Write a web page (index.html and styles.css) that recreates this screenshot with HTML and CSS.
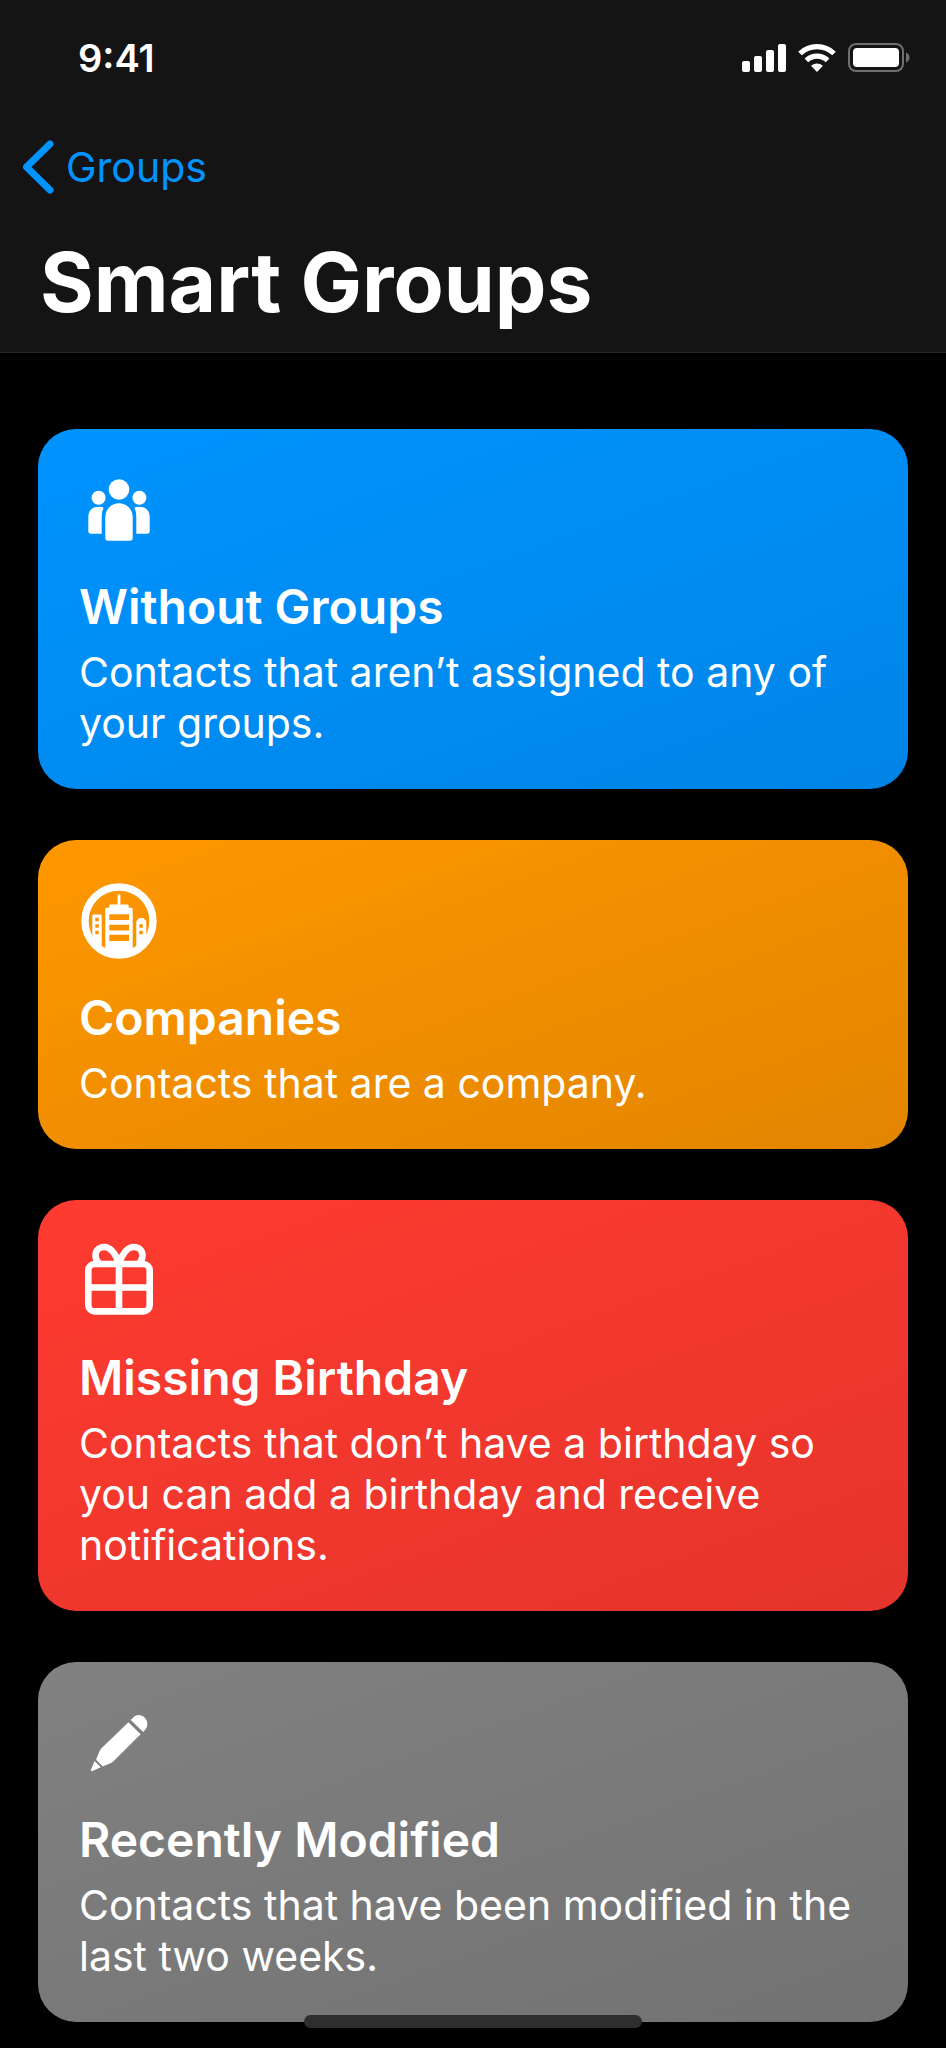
FILE: index.html
```html
<!DOCTYPE html>
<html lang="en">

<head>
  <meta charset="UTF-8">
  <meta name="viewport" content="width=device-width, initial-scale=1.0">
  <title>Smart Groups</title>

  <link rel="stylesheet" href="styles.css">
</head>

<body>
  <header class="header">
    <div class="status-bar">
      <span class="time">9:41</span>
      <div class="status-icons">
        <svg width="44" height="30" viewBox="0 0 44 30" fill="#fff">
          <rect x="0" y="18" width="8" height="11" rx="2" />
          <rect x="12" y="13" width="8" height="16" rx="2" />
          <rect x="24" y="7" width="8" height="22" rx="2" />
          <rect x="36" y="1" width="8" height="28" rx="2" />
        </svg>
        <svg width="38" height="30" viewBox="0 0 38 30">
          <path d="M2 10.5A24.5 24.5 0 0 1 36 10.5" fill="none" stroke="#fff" stroke-width="5.2" />
          <path d="M8.4 17.4A15.3 15.3 0 0 1 29.6 17.4" fill="none" stroke="#fff" stroke-width="5.2" />
          <path d="M19 29L13 22.8Q19 18 25 22.8Z" fill="#fff" />
        </svg>
        <svg width="62" height="30" viewBox="0 0 62 30">
          <rect x="1" y="1" width="54" height="27" rx="7" fill="none" stroke="#6f6f6f" stroke-width="2" />
          <rect x="5" y="5" width="46" height="19" rx="4" fill="#fff" />
          <path d="M58 9.5Q61.5 11 61.5 14.5Q61.5 18 58 19.5Z" fill="#6f6f6f" />
        </svg>
      </div>
    </div>
    <a class="back" href="#">
      <svg width="32" height="54" viewBox="0 0 32 54" fill="none" stroke="#0094ff" stroke-width="7" stroke-linecap="round" stroke-linejoin="round">
        <path d="M28 4L4.5 27L28 50" />
      </svg>
      Groups
    </a>
    <h1>Smart Groups</h1>
  </header>

  <main class="cards">
    <a class="card blue" href="#">
      <svg class="icon" viewBox="0 0 80 80" fill="#fff">
        <circle cx="40" cy="19.5" r="10.3" />
        <path d="M26.3 47A13.7 13.7 0 0 1 53.7 47V68Q53.7 70.7 51 70.7H29Q26.3 70.7 26.3 68Z" />
        <circle cx="19.6" cy="27.8" r="7" />
        <circle cx="60.4" cy="27.8" r="7" />
        <path d="M9.3 47Q9.5 37 20 36.8Q23 36.8 24.7 37.8Q22.7 41 22.7 47V63.8H12Q9.3 63.8 9.3 61Z" />
        <path d="M70.7 47Q70.5 37 60 36.8Q57 36.8 55.3 37.8Q57.3 41 57.3 47V63.8H68Q70.7 63.8 70.7 61Z" />
      </svg>
      <h2>Without Groups</h2>
      <p>Contacts that aren’t assigned to any of your groups.</p>
    </a>

    <a class="card orange" href="#">
      <svg class="icon" viewBox="0 0 80 80" fill="#fff">
        <circle cx="40" cy="40" r="34" fill="none" stroke="#fff" stroke-width="7.4" />
        <path fill-rule="evenodd" d="M26.3 72V28Q26.3 26.7 27.6 26.7H30.3V24.7Q30.3 23.4 31.6 23.4H38.6V14.4Q38.6 13.2 40 13.2Q41.4 13.2 41.4 14.4V23.4H48.4Q49.7 23.4 49.7 24.7V26.7H52.4Q53.7 26.7 53.7 28V72ZM30.3 33.3V39H50V33.3ZM30.3 43.7V49.5H50V43.7ZM30.3 53.8V60H50V53.8Z" />
        <path fill-rule="evenodd" d="M13.3 58V35Q13.3 33.6 14.7 33.6H21.3Q22.7 33.6 22.7 35V65.5ZM16.3 36.8V40.3H19.8V36.8ZM16.3 43.3V46.8H19.8V43.3ZM16.3 49.8V53.3H19.8V49.8Z" />
        <path fill-rule="evenodd" d="M57.3 65.5V40L60.3 37H64.3L67.3 40V58ZM60.3 43.3V46.8H63.8V43.3ZM60.3 49.8V53.3H63.8V49.8Z" />
      </svg>
      <h2>Companies</h2>
      <p>Contacts that are a company.</p>
    </a>

    <a class="card red" href="#">
      <svg class="icon" viewBox="0 0 80 80" fill="none" stroke="#fff" stroke-width="6.6">
        <rect x="9.3" y="23" width="61.4" height="47.4" rx="6.5" />
        <path d="M40 23V70M9.3 46.5H70.7" />
        <path d="M40 22C36 12 31 6 25.5 6C19.5 6 16.5 10 16.5 14.5C16.5 17.5 17.5 20 20 22.5" />
        <path d="M40 22C44 12 49 6 54.5 6C60.5 6 63.5 10 63.5 14.5C63.5 17.5 62.5 20 60 22.5" />
      </svg>
      <h2>Missing Birthday</h2>
      <p>Contacts that don’t have a birthday so you can add a birthday and receive notifications.</p>
    </a>

    <a class="card gray" href="#">
      <svg class="icon" viewBox="0 0 80 80" fill="#fff">
        <path d="M15.6 58L21.8 64.3L13.4 68Q11.4 68.6 12 66.6Z" />
        <path d="M17.5 55.5L20.3 48.7Q21 46.7 22.5 45.2L49.4 19.2L61.6 31.3L34.5 58.2Q33 59.7 31 60.5L24.2 63.3Q23.6 63.4 23 62.8L17.6 57.2Q17 56.4 17.5 55.5Z" />
        <path d="M51.7 17L54.5 14.2C58 10.7 63 11.7 65.5 14.5C68.8 17.8 69.5 23 66.4 26.5L64.2 29Z" />
      </svg>
      <h2>Recently Modified</h2>
      <p>Contacts that have been modified in the last two weeks.</p>
    </a>
  </main>

  <div class="home-indicator"></div>
</body>

</html>
```

FILE: styles.css
```css
* {
  box-sizing: border-box;
}

body {
  margin: 0;
  background-color: #000;
  color: #fff;
  font-family: Inter, "Liberation Sans", sans-serif;
}

svg {
  display: block;
}

h1,
h2,
p {
  margin: 0;
}

.header {
  background-color: #141414;
  border-bottom: 1px solid #262626;
  padding-bottom: 18px;
}

.status-bar {
  display: flex;
  align-items: center;
  justify-content: space-between;
  height: 116px;
  padding: 0 36px 0 78px;
}

.time {
  font-size: 38px;
  font-weight: 600;
}

.status-icons {
  display: flex;
  gap: 12px;
}

.back {
  display: flex;
  align-items: center;
  width: fit-content;
  gap: 12px;
  margin: 24px 0 38px 22px;
  color: #0094ff;
  font-size: 41px;
  line-height: 54px;
  text-decoration: none;
}

h1 {
  padding: 0 40px;
  font-size: 82px;
  font-weight: 700;
  line-height: 102px;
}

.cards {
  display: flex;
  flex-direction: column;
  gap: 51px;
  padding: 76px 38px 26px;
}

.card {
  display: block;
  padding: 41px;
  padding-bottom: 40px;
  border-radius: 38px;
  color: #fff;
  text-decoration: none;
}

.icon {
  width: 80px;
  height: 80px;
  margin-bottom: 28px;
}

.card h2 {
  margin-bottom: 11px;
  font-size: 48px;
  font-weight: 600;
  line-height: 58px;
}

.card p {
  font-size: 41px;
  line-height: 51px;
}

.blue {
  background: linear-gradient(160deg, #0094ff, #0084e6);
}

.orange {
  background: linear-gradient(160deg, #ff9700, #e28500);
}

.red {
  background: linear-gradient(160deg, #ff3b30, #e4342b);
}

.gray {
  background: linear-gradient(160deg, #818181, #727272);
}

.home-indicator {
  position: fixed;
  bottom: 20px;
  left: 50%;
  width: 338px;
  height: 13px;
  margin-left: -169px;
  border-radius: 7px;
  background-color: #2e2e2e;
}
```
